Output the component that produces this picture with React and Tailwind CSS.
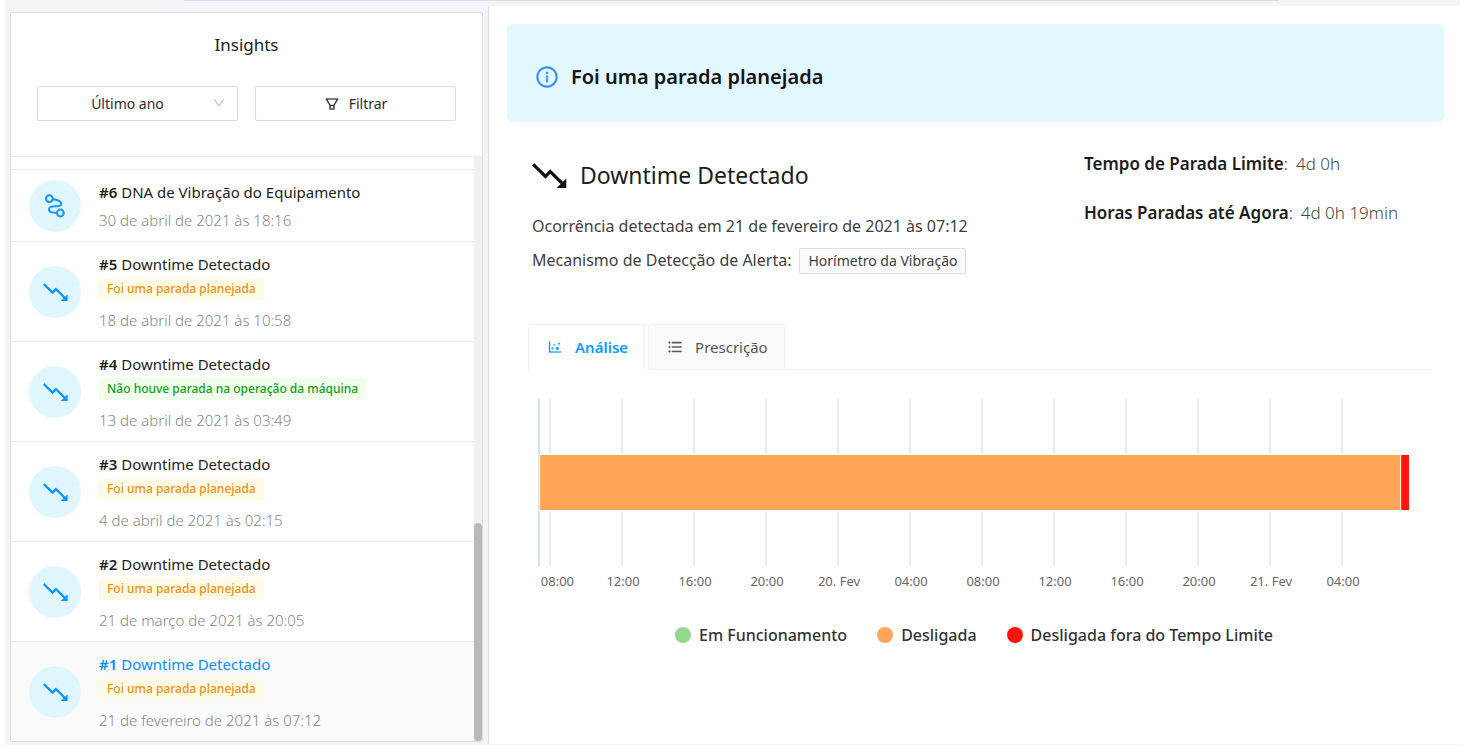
import { useState } from 'react';
import {
  AiOutlineDotChart,
  AiOutlineDown,
  AiOutlineFilter,
  AiOutlineInfoCircle,
  AiOutlineUnorderedList,
} from 'react-icons/ai';

const insights = [
  { id: 6, title: 'DNA de Vibração do Equipamento', date: '30 de abril de 2021 às 18:16', icon: 'dna' },
  { id: 5, title: 'Downtime Detectado', date: '18 de abril de 2021 às 10:58', tag: 'planned' },
  { id: 4, title: 'Downtime Detectado', date: '13 de abril de 2021 às 03:49', tag: 'none' },
  { id: 3, title: 'Downtime Detectado', date: '4 de abril de 2021 às 02:15', tag: 'planned' },
  { id: 2, title: 'Downtime Detectado', date: '21 de março de 2021 às 20:05', tag: 'planned' },
  { id: 1, title: 'Downtime Detectado', date: '21 de fevereiro de 2021 às 07:12', tag: 'planned' },
];

const tags = {
  planned: { label: 'Foi uma parada planejada', className: 'bg-[#fffae6] text-[#f0900f]' },
  none: { label: 'Não houve parada na operação da máquina', className: 'bg-[#f2feec] text-[#0fa01e]' },
};

const ticks = ['08:00', '12:00', '16:00', '20:00', '20. Fev', '04:00', '08:00', '12:00', '16:00', '20:00', '21. Fev', '04:00'];

const legend = [
  { label: 'Em Funcionamento', color: 'bg-[#95d78c]' },
  { label: 'Desligada', color: 'bg-[#ffa658]' },
  { label: 'Desligada fora do Tempo Limite', color: 'bg-[#ff150d]' },
];

function TrendDownIcon({ className }) {
  return (
    <svg className={className} viewBox="0 0 25 18" fill="none" aria-hidden="true">
      <path d="M0.8 1L9.6 9.6L13 6.2L21.5 14.5" stroke="currentColor" strokeWidth="2.4" />
      <path d="M24.6 11.2V18H17.6Z" fill="currentColor" />
    </svg>
  );
}

function DnaIcon({ className }) {
  return (
    <svg className={className} viewBox="0 0 20 24" fill="none" stroke="currentColor" strokeWidth="2" aria-hidden="true">
      <circle cx="4.4" cy="4.6" r="3.4" />
      <circle cx="15.4" cy="19" r="3.4" />
      <path d="M7.8 5.2C12 5.4 16.2 7.2 16.2 9.8C16.2 12.4 13.4 12.2 10.2 12.2C6.4 12.2 4 13.2 4 15.4C4 18 7 19 12 18.8" />
    </svg>
  );
}

function InsightRow({ item, active, onSelect }) {
  const tag = tags[item.tag];
  return (
    <li className={active ? 'border-t border-[#ececec] bg-[#fafafa]' : 'border-t border-[#ececec]'}>
      <button type="button" onClick={onSelect} className="flex w-full items-center gap-[18px] pt-[10px] pb-[9px] pl-[18px] text-left">
        <span className="flex size-[52px] shrink-0 items-center justify-center rounded-full bg-[#e0f6ff] text-[#0c96ff]">
          {item.icon === 'dna' ? <DnaIcon className="h-6 w-5" /> : <TrendDownIcon className="h-[18px] w-[25px]" />}
        </span>
        <span className="flex flex-col items-start">
          <span className={active ? 'text-[15px] leading-6 text-[#0c8cff]' : 'text-[15px] leading-6 text-[#1c1c1c]'}>
            <b className="font-semibold">#{item.id}</b> {item.title}
          </span>
          {tag && (
            <span className={`mt-[2px] mb-1 rounded-xs px-2 text-xs leading-[22px] font-medium ${tag.className}`}>{tag.label}</span>
          )}
          <span className="mt-1 text-[15px] leading-6 font-light text-[#858585]">{item.date}</span>
        </span>
      </button>
    </li>
  );
}

function Sidebar() {
  const [selected, setSelected] = useState(1);

  return (
    <aside className="mt-3 mb-1 ml-[5px] flex w-[473px] shrink-0 flex-col rounded-xs border border-[#d9dfe6] bg-white">
      <header className="flex flex-col gap-[27px] px-[26px] pt-[18px] pb-[35px]">
        <h1 className="text-center text-[17px] leading-7 text-[#1c1c1c]">Insights</h1>
        <div className="grid grid-cols-2 gap-[17px] text-sm text-[#2b2b2b]">
          <div className="relative">
            <select aria-label="Período" className="h-[35px] w-full appearance-none rounded-xs border border-[#d9d9d9] bg-white pr-5 text-center [text-align-last:center]">
              <option>Último ano</option>
            </select>
            <AiOutlineDown className="pointer-events-none absolute top-[10px] right-3 size-[14px] text-[#bfbfbf]" />
          </div>
          <button type="button" className="flex h-[35px] items-center justify-center gap-[9px] rounded-xs border border-[#d9d9d9] bg-white">
            <AiOutlineFilter className="size-4 stroke-[16]" />
            Filtrar
          </button>
        </div>
      </header>
      <div className="flex grow border-t border-[#ececec]">
        <ul className="grow pt-3">
          {insights.map((item) => (
            <InsightRow key={item.id} item={item} active={item.id === selected} onSelect={() => setSelected(item.id)} />
          ))}
        </ul>
        <div className="flex w-2 flex-col justify-end bg-[#f0f0f0]">
          <div className="h-[218px] rounded-full bg-[#b9b9b9]" />
        </div>
      </div>
    </aside>
  );
}

function DowntimeChart() {
  // the axis spans 870 units and a tick falls every 72, starting at 11
  const tickX = (i) => `${((11 + i * 72) / 870) * 100}%`;

  return (
    <figure className="pt-[29px] pr-[22px] pl-[11px]">
      <svg className="h-[200px] w-full overflow-visible" role="img" aria-label="Histórico de funcionamento">
        {ticks.map((label, i) => (
          <g key={i}>
            <line x1={tickX(i)} x2={tickX(i)} y1="0" y2="167" stroke="#ececec" strokeWidth="2" />
            <text x={i === 0 ? '2%' : tickX(i)} y="187" dx="1" textAnchor="middle" className="fill-[#666] text-[13px]">
              {label}
            </text>
          </g>
        ))}
        <line x1="0" x2="0" y1="0" y2="167" stroke="#d5dfee" strokeWidth="2" />
        <rect x="0" y="55" width="100%" height="58" fill="#fff" />
        <rect x="1" y="56" width="99%" height="55" fill="#ffa658" />
        <rect x="99%" y="56" width="2" height="55" fill="#fff" />
        <rect x="99.1%" y="56" width="0.9%" height="55" fill="#ff150d" />
      </svg>
      <ul className="mt-6 flex items-center justify-center gap-[30px] text-base leading-6 font-medium text-[#333]">
        {legend.map((entry) => (
          <li key={entry.label} className="flex items-center gap-2">
            <span className={`size-4 rounded-full ${entry.color}`} />
            {entry.label}
          </li>
        ))}
      </ul>
    </figure>
  );
}

function Detail() {
  const [tab, setTab] = useState('analise');
  const on = 'border-b-white bg-white font-semibold text-[#0c9bff]';
  const off = 'border-b-[#f0f0f0] bg-[#fafafa] text-[#555]';

  return (
    <main className="mt-[6px] mb-[2px] ml-[5px] grow border-l border-[#d9dfe6] bg-white pt-[18px] pr-4 pl-[18px]">
      <div role="alert" className="flex h-[98px] items-center gap-3 rounded-md bg-[#e3f7ff] px-7 pt-2">
        <AiOutlineInfoCircle className="size-6 stroke-[16] text-[#2e90ff]" />
        <strong className="text-xl font-semibold text-[#141414]">Foi uma parada planejada</strong>
      </div>

      <div className="pr-[13px] pl-[21px]">
        <div className="flex justify-between px-1 pt-[29px]">
          <div className="pt-2">
            <h2 className="flex items-center gap-[13px] text-[23px] leading-8 text-[#1c1c1c]">
              <TrendDownIcon className="h-[25px] w-[35px] text-[#111]" />
              Downtime Detectado
            </h2>
            <p className="mt-[23px] text-base leading-6 text-[#404040]">Ocorrência detectada em 21 de fevereiro de 2021 às 07:12</p>
            <p className="mt-[9px] flex items-center gap-2 text-base leading-[27px] text-[#404040]">
              Mecanismo de Detecção de Alerta:
              <span className="rounded-xs border border-[#dcdcdc] bg-[#fafafa] px-2 text-sm leading-6">Horímetro da Vibração</span>
            </p>
          </div>
          <dl className="flex w-[343px] flex-col gap-6 text-[17px] leading-[25px]">
            <div className="flex gap-2">
              <dt className="font-semibold text-[#1c1c1c]">Tempo de Parada Limite<span className="font-light">:</span></dt>
              <dd className="font-light text-[#444]">4d 0h</dd>
            </div>
            <div className="flex gap-2">
              <dt className="font-semibold text-[#1c1c1c]">Horas Paradas até Agora<span className="font-light">:</span></dt>
              <dd className="font-light text-[#444]">4d 0h 19min</dd>
            </div>
          </dl>
        </div>

        <div role="tablist" className="mt-[50px] flex gap-[3px] text-[15px]">
          <button
            type="button"
            role="tab"
            aria-selected={tab === 'analise'}
            onClick={() => setTab('analise')}
            className={`flex h-[46px] items-center gap-3 rounded-t-xs border border-[#f0f0f0] pr-4 pl-[18px] ${tab === 'analise' ? on : off}`}
          >
            <AiOutlineDotChart className="size-4 stroke-[16]" />
            Análise
          </button>
          <button
            type="button"
            role="tab"
            aria-selected={tab === 'prescricao'}
            onClick={() => setTab('prescricao')}
            className={`flex h-[46px] items-center gap-3 rounded-t-xs border border-[#f0f0f0] pr-4 pl-[18px] ${tab === 'prescricao' ? on : off}`}
          >
            <AiOutlineUnorderedList className="size-4 stroke-[30]" />
            Prescrição
          </button>
          <span className="-ml-[3px] grow border-b border-[#f0f0f0]" />
        </div>
        <DowntimeChart />
      </div>
    </main>
  );
}

export default function App() {
  return (
    <div className="bg-white pr-1 pl-[5px] font-['Noto_Sans',sans-serif]">
      <div className="relative flex min-h-screen bg-[#f2f4f8]">
        {/* bottom edge of the bar above */}
        <div className="absolute top-0 right-[181px] left-[179px] h-px bg-[#d5dde5]" />
        <Sidebar />
        <Detail />
      </div>
    </div>
  );
}
